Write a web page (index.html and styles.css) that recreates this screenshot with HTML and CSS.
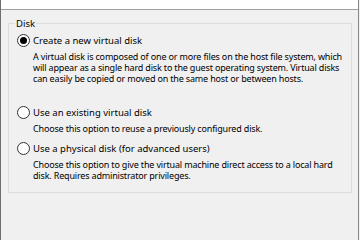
FILE: index.html
```html
<!DOCTYPE html>
<html lang="en">
<head>
  <meta charset="UTF-8">
  <title>Disk</title>
  <link rel="stylesheet" href="styles.css">
</head>
<body>
<div class="window">
  <div class="header"></div>
  <div class="page">
    <fieldset class="group">
      <legend>Disk</legend>

      <div class="option option-first">
        <label class="radio-row">
          <span class="radio checked"></span>
          <span>Create a new virtual disk</span>
        </label>
        <p class="desc">A virtual disk is composed of one or more files on the host file system, which will appear as a single hard disk to the guest operating system. Virtual disks can easily be copied or moved on the same host or between hosts.</p>
      </div>

      <div class="option">
        <label class="radio-row">
          <span class="radio"></span>
          <span>Use an existing virtual disk</span>
        </label>
        <p class="desc">Choose this option to reuse a previously configured disk.</p>
      </div>

      <div class="option">
        <label class="radio-row">
          <span class="radio"></span>
          <span>Use a physical disk (for advanced users)</span>
        </label>
        <p class="desc">Choose this option to give the virtual machine direct access to a local hard disk. Requires administrator privileges.</p>
      </div>
    </fieldset>
  </div>
</div>
</body>
</html>
```

FILE: styles.css
```css
body {
    margin: 0;
    padding: 0;
    background: #f0f0f0;
    font-family: "Noto Sans", "Liberation Sans", sans-serif;
    font-size: 9.5px;
    color: #000;
    overflow: hidden;
}

.window {
    width: 357px;
    height: 240px;
    border-left: 1px solid #6e6e6e;
    border-right: 1px solid #8a8a8a;
    background: #f0f0f0;
}

.header {
    height: 9px;
    background: #fff;
    border-bottom: 1px solid #a0a0a0;
}

.page {
    padding: 8px 6px 0 7px;
}

.group {
    margin: 0;
    padding: 5px 0 0 8px;
    border: 1px solid #dcdcdc;
    box-sizing: border-box;
    height: 175px;
}

.group legend {
    padding: 0 1px;
    margin-left: -2px;
    line-height: 11px;
}

.option {
    margin-bottom: 8px;
}

.option-first {
    margin-bottom: 22px;
}

.radio-row {
    display: flex;
    align-items: center;
    gap: 3px;
    height: 13px;
}

.radio {
    width: 11px;
    height: 11px;
    border: 1px solid #333;
    border-radius: 50%;
    background: #fff;
    position: relative;
    flex: none;
}

.radio.checked::after {
    content: "";
    position: absolute;
    left: 2px;
    top: 2px;
    width: 7px;
    height: 7px;
    border-radius: 50%;
    background: #000;
}

.desc {
    margin: 4px 0 0 16px;
    font-size: 9px;
    letter-spacing: -0.17px;
    line-height: 11px;
    width: 315px;
}
```
